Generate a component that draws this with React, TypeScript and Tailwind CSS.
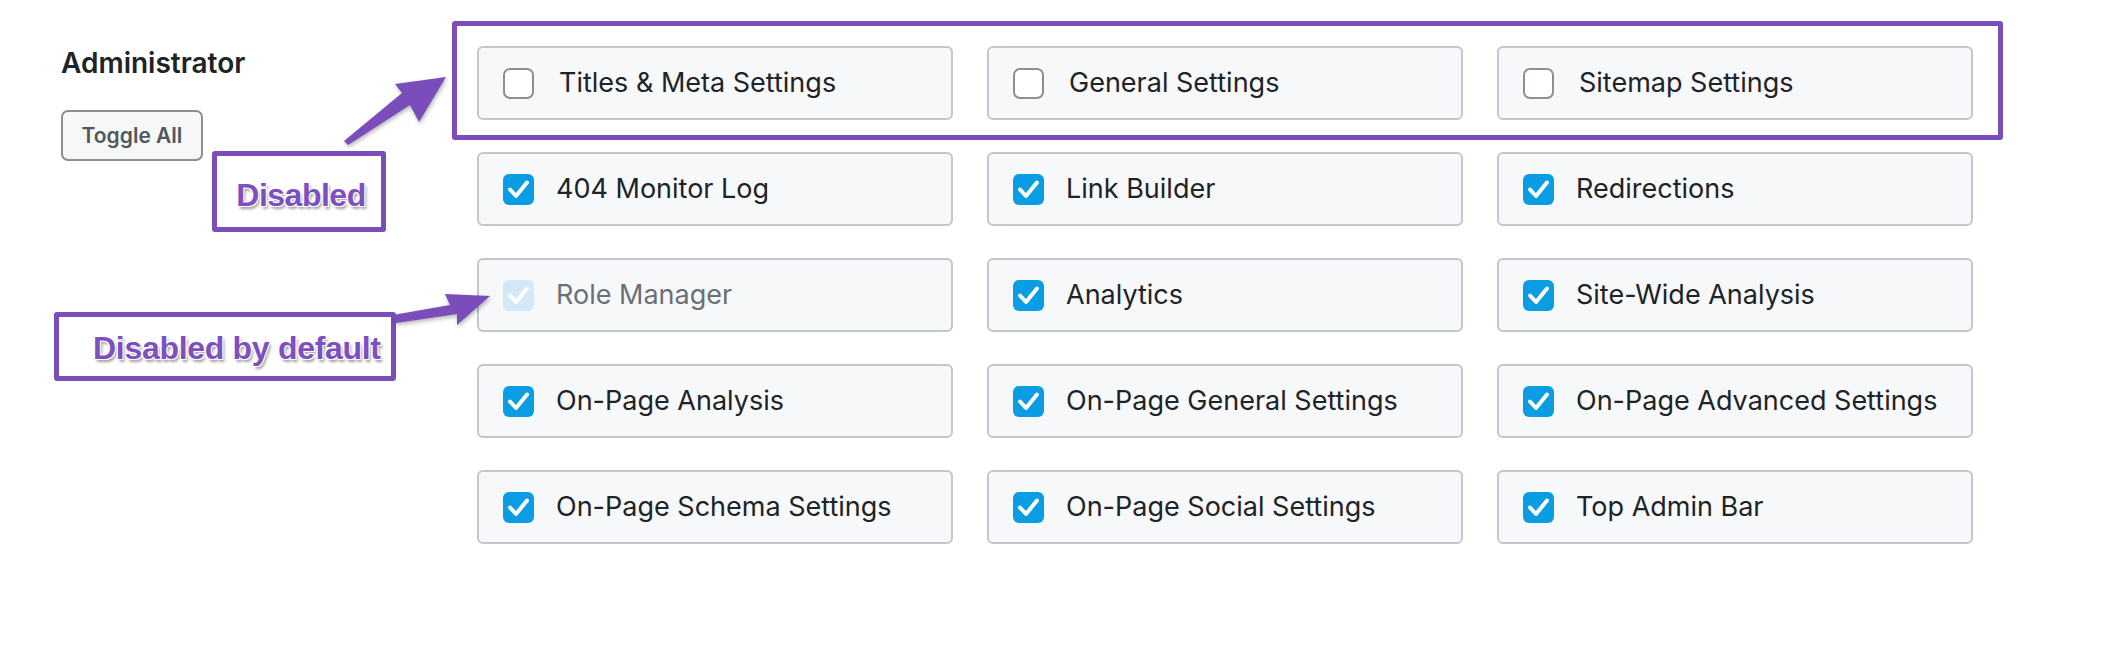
import React from "react";

type Item = { label: string; checked: boolean; disabled?: boolean };

const items: Item[] = [
  { label: "Titles & Meta Settings", checked: false },
  { label: "General Settings", checked: false },
  { label: "Sitemap Settings", checked: false },
  { label: "404 Monitor Log", checked: true },
  { label: "Link Builder", checked: true },
  { label: "Redirections", checked: true },
  { label: "Role Manager", checked: true, disabled: true },
  { label: "Analytics", checked: true },
  { label: "Site-Wide Analysis", checked: true },
  { label: "On-Page Analysis", checked: true },
  { label: "On-Page General Settings", checked: true },
  { label: "On-Page Advanced Settings", checked: true },
  { label: "On-Page Schema Settings", checked: true },
  { label: "On-Page Social Settings", checked: true },
  { label: "Top Admin Bar", checked: true },
];

const Box = ({ checked, disabled }: { checked: boolean; disabled?: boolean }) => {
  if (!checked) {
    return (
      <span className="w-[31px] h-[31px] shrink-0 rounded-[7px] border-2 border-[#8c8f94] bg-white" />
    );
  }
  return (
    <span
      className={
        disabled
          ? "w-[31px] h-[31px] shrink-0 rounded-[6px] bg-[#d3e9f8] flex items-center justify-center"
          : "w-[31px] h-[31px] shrink-0 rounded-[6px] bg-[#0b9de3] flex items-center justify-center"
      }
    >
      <svg width="31" height="31" viewBox="0 0 31 31">
        <path
          d="M7 15.5 L13 22 L24 8.5"
          fill="none"
          stroke="#fff"
          strokeWidth="4"
          strokeLinecap="round"
          strokeLinejoin="round"
        />
      </svg>
    </span>
  );
};

const Card = ({ item }: { item: Item }) => (
  <label
    className={
      "h-[74px] rounded-[6px] border-2 border-[#c3c6cc] bg-[#f7f8fa] flex items-center pl-[24px] " +
      (item.checked ? "gap-[22px]" : "gap-[25px]")
    }
  >
    <Box checked={item.checked} disabled={item.disabled} />
    <span
      className={
        item.disabled
          ? "text-[27px] leading-[32px] text-[#6b6f75]"
          : "text-[27px] leading-[32px] text-[#1d2327]"
      }
    >
      {item.label}
    </span>
  </label>
);

const noteText =
  "font-['Liberation_Sans',Arial,sans-serif] font-bold text-[#7d4fc1] [text-shadow:0_0_1px_#fff,1px_1px_0_#fff,-1px_-1px_0_#fff,1px_-1px_0_#fff,-1px_1px_0_#fff,2px_3px_3px_rgba(0,0,0,0.4)]";

export default function App() {
  return (
    <div className="relative w-[2124px] h-[650px] bg-white font-['Inter',sans-serif] overflow-hidden">
      <div className="flex">
        <div className="w-[477px] shrink-0 pl-[61px] pt-[47px]">
          <h2 className="text-[28px] leading-[32px] font-semibold text-[#1d2327]">Administrator</h2>
          <button className="mt-[31px] w-[142px] h-[51px] rounded-[7px] border-2 border-[#8c8f94] bg-[#f6f7f7] text-[21px] font-semibold text-[#50575e]">
            Toggle All
          </button>
        </div>
        <div className="pt-[46px] grid grid-cols-[476px_476px_476px] gap-x-[34px] gap-y-[32px]">
          {items.map((item) => (
            <Card key={item.label} item={item} />
          ))}
        </div>
      </div>

      {/* annotations */}
      <div className="absolute left-[452px] top-[21px] w-[1551px] h-[119px] border-[5px] border-[#7b4dbb] rounded-[3px]" />
      <div className="absolute left-[212px] top-[151px] w-[174px] h-[81px] border-[5px] border-[#7b4dbb] rounded-[3px] flex items-center justify-center pt-[6px] pl-[4px]">
        <span className={noteText + " text-[32px] leading-[36px] tracking-[-0.5px]"}>Disabled</span>
      </div>
      <div className="absolute left-[54px] top-[312px] w-[342px] h-[69px] border-[5px] border-[#7b4dbb] rounded-[3px] flex items-center pl-[34px] pt-[2px]">
        <span className={noteText + " text-[32px] leading-[36px] tracking-[-0.3px]"}>Disabled by default</span>
      </div>
      <svg
        className="absolute left-0 top-0 pointer-events-none drop-shadow-[1px_2px_2px_rgba(0,0,0,0.3)]"
        width="2124"
        height="650"
        viewBox="0 0 2124 650"
      >
        <polygon
          points="344,141 402,93 395,84 446,77 419,122 410,105 348,145"
          fill="#7b4dbb"
        />
        <polygon
          points="393,315 450,305 445,294 490,296 457,325 457,314 396,323"
          fill="#7b4dbb"
        />
      </svg>
    </div>
  );
}
